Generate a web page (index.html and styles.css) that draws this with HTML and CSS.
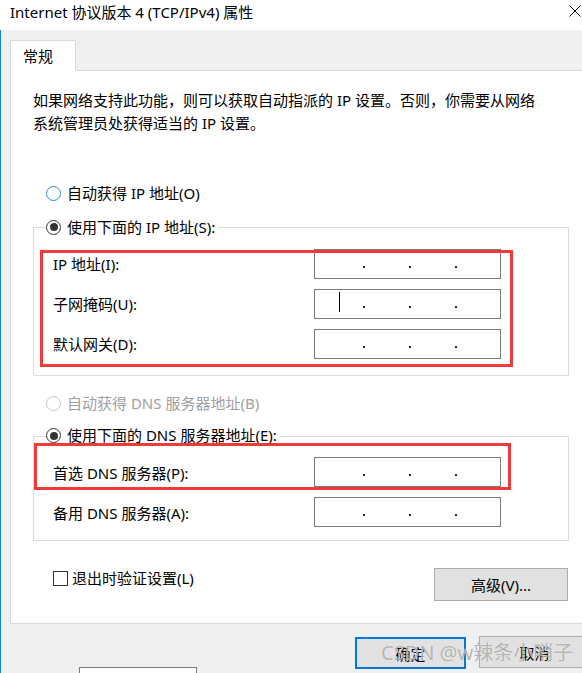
FILE: index.html
```html
<!DOCTYPE html>
<html lang="zh-CN">
<head>
    <meta charset="UTF-8">
    <title>Internet 协议版本 4 (TCP/IPv4) 属性</title>
    <link rel="stylesheet" href="styles.css">
</head>
<body>

    <div class="titlebar">
        <span>Internet 协议版本 4 (TCP/IPv4) 属性</span>
        <svg class="close" width="12" height="12" viewBox="0 0 12 12">
            <path d="M0.5 0.5 L11.5 11.5 M11.5 0.5 L0.5 11.5" stroke="#000" stroke-width="1" fill="none"/>
        </svg>
    </div>

    <div class="dialog">
        <div class="tab">常规</div>
        <div class="panel">
            <p class="desc">如果网络支持此功能，则可以获取自动指派的 IP 设置。否则，你需要从网络<br>系统管理员处获得适当的 IP 设置。</p>

            <div class="option first">
                <span class="radio hover"></span>
                <span>自动获得 IP 地址(O)</span>
            </div>

            <fieldset class="group">
                <legend>
                    <span class="option"><span class="radio checked"></span><span>使用下面的 IP 地址(S):</span></span>
                </legend>
                <div class="fields">
                    <label>IP 地址(I):</label>
                    <div class="ip"><i></i><i></i><i></i></div>
                    <label>子网掩码(U):</label>
                    <div class="ip"><b class="caret"></b><i></i><i></i><i></i></div>
                    <label>默认网关(D):</label>
                    <div class="ip"><i></i><i></i><i></i></div>
                </div>
            </fieldset>

            <div class="option disabled">
                <span class="radio"></span>
                <span>自动获得 DNS 服务器地址(B)</span>
            </div>

            <fieldset class="group dns">
                <legend>
                    <span class="option"><span class="radio checked"></span><span>使用下面的 DNS 服务器地址(E):</span></span>
                </legend>
                <div class="fields">
                    <label>首选 DNS 服务器(P):</label>
                    <div class="ip"><i></i><i></i><i></i></div>
                    <label>备用 DNS 服务器(A):</label>
                    <div class="ip"><i></i><i></i><i></i></div>
                </div>
            </fieldset>

            <div class="actions">
                <label class="check"><span class="box"></span>退出时验证设置(L)</label>
                <button class="btn advanced">高级(V)...</button>
            </div>

            <!-- rote Markierungen -->
            <div class="mark mark-ip"></div>
            <div class="mark mark-dns"></div>
        </div>

        <div class="footer">
            <div class="behind">Internet 协议版本 6</div>
            <button class="btn ok">确定</button>
            <button class="btn cancel">取消</button>
            <span class="watermark">CSDN @w辣条小哨子</span>
        </div>
    </div>

</body>
</html>
```

FILE: styles.css
```css
* {
    box-sizing: border-box;
}
html, body {
    margin: 0;
}
body {
    width: 582px;
    height: 673px;
    overflow: hidden;
    background-color: #f0f0f0;
    font-family: "Noto Sans", "Noto Sans CJK SC", sans-serif;
    font-size: 15px;
    color: #000;
}
.titlebar {
    height: 30px;
    display: flex;
    align-items: flex-start;
    padding-left: 10px;
    line-height: 24px;
    background-color: #fff;
}
.close {
    margin: 5px 1px 0 auto;
}
.dialog {
    height: 643px;
    padding: 10px 0 0 9px;
    border-left: 1px solid #1883d7;
}
.tab {
    position: relative;
    z-index: 1;
    width: 66px;
    height: 31px;
    margin-bottom: -1px;
    padding-left: 12px;
    line-height: 30px;
    background-color: #fff;
    border: 1px solid #d9d9d9;
    border-bottom: 0;
}
.panel {
    position: relative;
    width: 580px;
    height: 554px;
    padding: 18px 0 0 22px;
    background-color: #fff;
    border: 1px solid #d9d9d9;
}
.desc {
    margin: 0;
    line-height: 23px;
}
.option {
    display: flex;
    align-items: center;
    gap: 6px;
    line-height: 23px;
    margin-left: 13px;
}
.option.first {
    margin-top: 47px;
}
.option.disabled {
    margin-top: 16px;
    color: #a0a0a0;
}
legend .option {
    display: inline-flex;
    margin-left: 0;
}
.radio {
    width: 15px;
    height: 15px;
    border: 1px solid #333;
    border-radius: 50%;
    display: flex;
    align-items: center;
    justify-content: center;
}
.radio.hover {
    border-color: #2a8ae2;
}
.disabled .radio {
    border-color: #c8c8c8;
}
.radio.checked::after {
    content: "";
    width: 8px;
    height: 8px;
    border-radius: 50%;
    background-color: #333;
}
.group {
    width: 536px;
    margin: 10px 0 0;
    padding: 8px 0 16px 12px;
    min-width: 0;
    border: 1px solid #dcdcdc;
}
.group legend {
    padding: 0 3px 2px 0;
}
.group.dns {
    margin-top: 9px;
    padding-bottom: 13px;
}
.fields {
    display: grid;
    grid-template-columns: 261px 187px;
    row-gap: 10px;
    align-items: center;
    padding-left: 7px;
}
.ip {
    position: relative;
    height: 30px;
    display: flex;
    gap: 44px;
    padding: 16px 0 0 48px;
    border: 1px solid #7a7a7a;
}
.ip i {
    width: 2px;
    height: 2px;
    background-color: #1c2a38;
}
.caret {
    position: absolute;
    left: 24px;
    top: 2px;
    width: 1px;
    height: 20px;
    background-color: #000;
}
.actions {
    width: 535px;
    margin-top: 27px;
    display: flex;
    justify-content: space-between;
    align-items: flex-start;
}
.check {
    display: flex;
    align-items: center;
    gap: 4px;
    margin: -1px 0 0 20px;
    line-height: 23px;
}
.box {
    width: 15px;
    height: 15px;
    border: 1px solid #333;
    background-color: #fff;
}
.btn {
    padding: 0;
    font: inherit;
    color: #000;
    background-color: #e1e1e1;
    border: 1px solid #adadad;
    flex-shrink: 0;
}
.advanced {
    width: 134px;
    height: 33px;
}
.mark {
    position: absolute;
    border: 3px solid #ef3a3a;
}
.mark-ip {
    left: 29px;
    top: 179px;
    width: 473px;
    height: 117px;
}
.mark-dns {
    left: 23px;
    top: 372px;
    width: 477px;
    height: 47px;
}
.footer {
    position: relative;
    display: flex;
    align-items: flex-start;
}
.behind {
    flex-shrink: 0;
    width: 118px;
    height: 30px;
    margin: 43px 0 0 69px;
    padding: 3px 0 0 8px;
    font-size: 13px;
    background-color: #fff;
    border: 1px solid #7a7a7a;
    white-space: nowrap;
    overflow: hidden;
}
.ok {
    width: 111px;
    height: 32px;
    margin: 13px 0 0 158px;
    border: 2px solid #0078d7;
}
.cancel {
    width: 111px;
    height: 32px;
    margin: 12px 0 0 13px;
}
.watermark {
    position: absolute;
    left: 371px;
    top: 17px;
    font-size: 20px;
    line-height: 24px;
    white-space: nowrap;
    color: rgba(120, 120, 120, 0.55);
    text-shadow: 0 0 1px rgba(255, 255, 255, 0.9);
}
```
